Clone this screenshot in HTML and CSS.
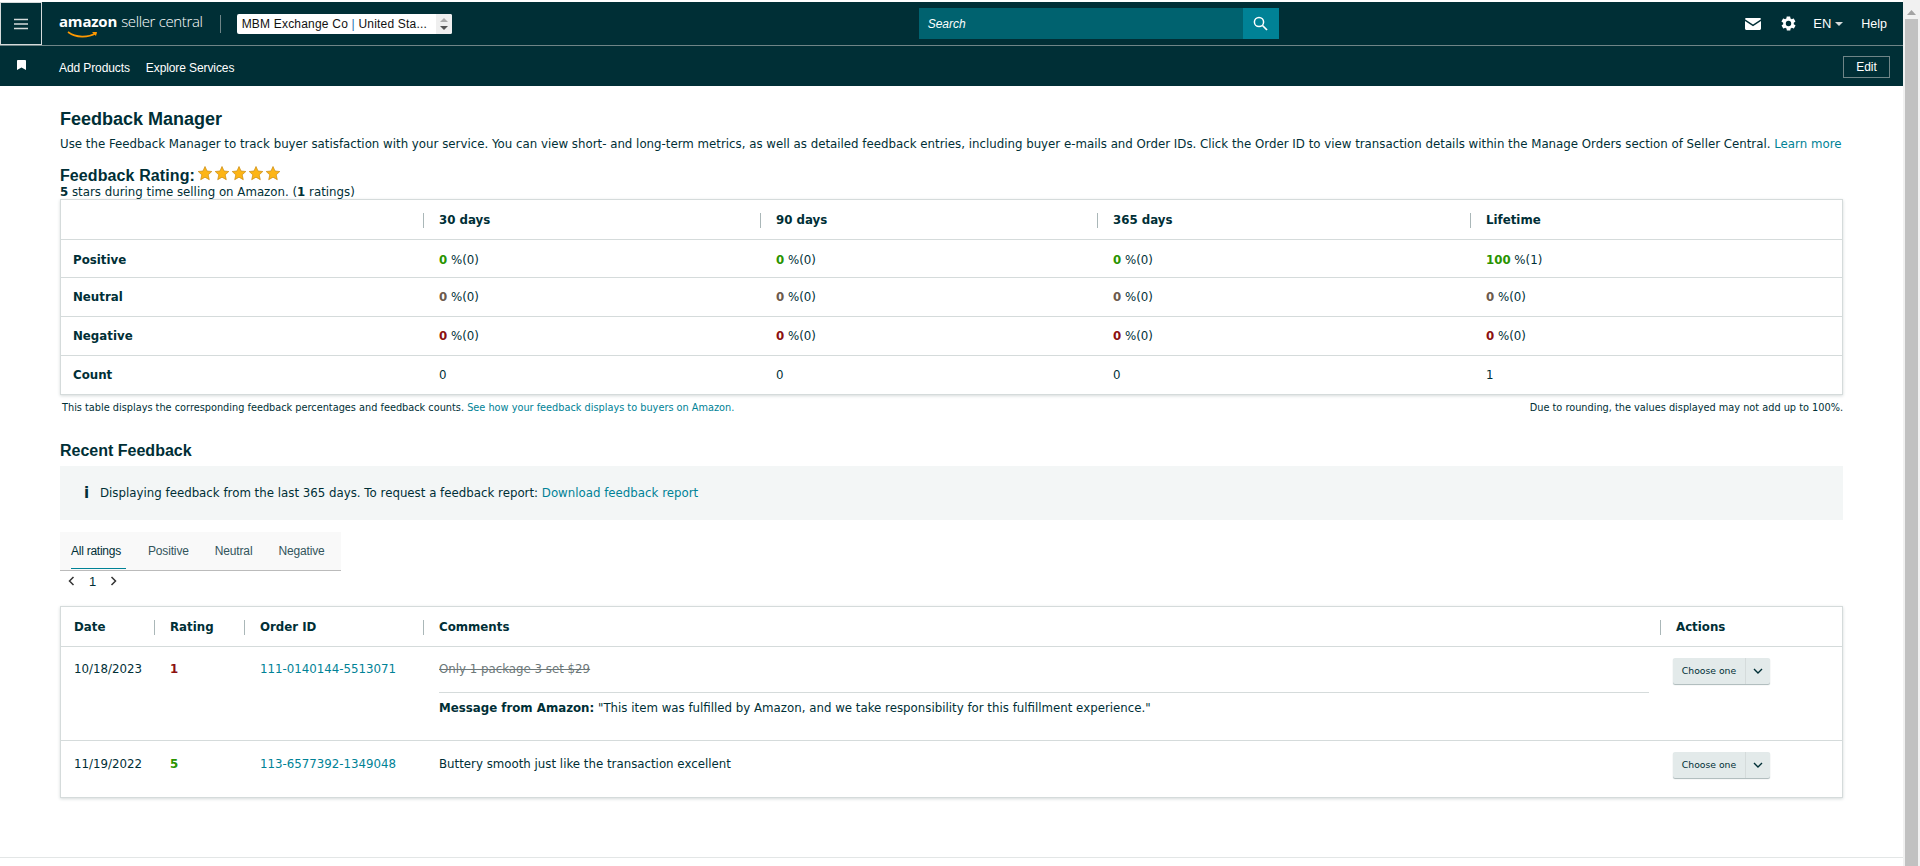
FILE: index.html
```html
<!DOCTYPE html>
<html lang="en">
<head>
  <meta charset="UTF-8">
  <title>Feedback Manager</title>
  <link rel="stylesheet" href="styles.css">
</head>
<body>
  <div class="page">
    <header class="topbar">
      <div class="nav-main">
        <button class="menu-btn" aria-label="Menu">
          <svg width="16" height="12" viewBox="0 0 16 12"><path d="M1 1.5h14M1 6h14M1 10.5h14" stroke="#d5dbdb" stroke-width="1.6" fill="none"/></svg>
        </button>
        <div class="logo">
          <span class="logo-amazon">amazon</span><span class="logo-seller">seller central</span>
          <svg class="logo-smile" width="32" height="8" viewBox="0 0 32 8"><path d="M1 1c8 6 20 6 28 1" stroke="#f90" stroke-width="1.6" fill="none"/><path d="M25 1l5 0-1 4z" fill="#f90"/></svg>
        </div>
        <div class="logo-sep"></div>
        <div class="account-select">
          <span class="account-text">MBM Exchange Co <em>|</em> United Sta...</span>
          <span class="account-arrows">
            <svg width="10" height="14" viewBox="0 0 10 14"><path d="M5 1l4 4H1z" fill="#aaa"/><path d="M1 9h8l-4 4z" fill="#555"/></svg>
          </span>
        </div>
        <div class="search">
          <span class="search-input">Search</span>
          <span class="search-btn">
            <svg width="15" height="15" viewBox="0 0 15 15"><circle cx="6" cy="6" r="4.6" stroke="#fff" stroke-width="1.5" fill="none"/><path d="M9.5 9.5l4.5 4.5" stroke="#fff" stroke-width="1.7"/></svg>
          </span>
        </div>
        <div class="nav-right">
          <svg class="icon-mail" width="16" height="12" viewBox="0 0 16 12"><path d="M1.5 0h13c.8 0 1.5.5 1.5 1.2L8 6.5 0 1.2C0 .5.7 0 1.5 0zM0 3l8 5.2L16 3v7.5c0 .8-.7 1.5-1.5 1.5h-13C.7 12 0 11.300 0 10.500z" fill="#fff"/></svg>
          <svg class="icon-gear" width="17" height="17" viewBox="0 0 24 24"><path fill="#fff" d="M19.4 13c0-.3.1-.6.1-1s0-.7-.1-1l2.100-1.600c.2-.2.2-.4.100-.6l-2-3.500c-.1-.2-.4-.3-.6-.2l-2.500 1c-.5-.4-1.100-.7-1.700-1l-.4-2.600c0-.3-.2-.4-.5-.4h-4c-.3 0-.5.100-.5.400l-.4 2.600c-.6.3-1.200.6-1.700 1l-2.500-1c-.2-.1-.5 0-.6.2l-2 3.500c-.1.2-.1.4.1.6L4.600 11c0 .3-.1.7-.1 1s0 .7.1 1l-2.100 1.600c-.2.2-.2.4-.1.6l2 3.500c.1.2.4.3.6.2l2.500-1c.5.4 1.100.7 1.700 1l.4 2.600c0 .3.2.4.5.4h4c.3 0 .5-.1.5-.4l.4-2.600c.6-.3 1.200-.6 1.700-1l2.500 1c.2.1.5 0 .6-.2l2-3.500c.1-.2.1-.4-.1-.6zM12 15.800a3.800 3.800 0 1 1 0-7.600 3.800 3.800 0 0 1 0 7.600z"/></svg>
          <span class="lang">EN<i class="caret"></i></span>
          <span class="help">Help</span>
        </div>
      </div>
      <div class="nav-sub">
        <svg class="icon-bookmark" width="9" height="10" viewBox="0 0 9 10"><path d="M1 0h7c.5 0 1 .4 1 1v9L4.500 7.500 0 10V1c0-.6.5-1 1-1z" fill="#fff"/></svg>
        <a class="sub-link">Add Products</a>
        <a class="sub-link">Explore Services</a>
        <button class="edit-btn">Edit</button>
      </div>
    </header>

    <main class="content">
      <h1 class="title">Feedback Manager</h1>
      <p class="intro">Use the Feedback Manager to track buyer satisfaction with your service. You can view short- and long-term metrics, as well as detailed feedback entries, including buyer e-mails and Order IDs. Click the Order ID to view transaction details within the Manage Orders section of Seller Central. <a class="link">Learn more</a></p>

      <div class="rating-line">
        <h2 class="rating-title">Feedback Rating:</h2>
        <svg class="stars" width="84" height="15" viewBox="0 0 84 15">
          <defs><polygon id="star" points="7,0.500 9,5 13.800,5.500 10.200,8.800 11.300,13.700 7,11.200 2.700,13.700 3.800,8.800 0.200,5.500 5,5" fill="#fdb515" stroke="#c98a10" stroke-width=".7"/></defs>
          <use href="#star" x="0"/><use href="#star" x="17"/><use href="#star" x="34"/><use href="#star" x="51"/><use href="#star" x="68"/>
        </svg>
      </div>
      <p class="rating-sub"><b>5</b> stars during time selling on Amazon. (<b>1</b> ratings)</p>

      <table class="card summary">
        <colgroup><col class="c-label"><col class="c-period"><col class="c-period"><col class="c-period3"><col></colgroup>
        <thead>
          <tr><th></th><th><span class="th-in">30 days</span></th><th><span class="th-in">90 days</span></th><th><span class="th-in">365 days</span></th><th><span class="th-in">Lifetime</span></th></tr>
        </thead>
        <tbody>
          <tr><th>Positive</th><td><b class="good">0</b> %(0)</td><td><b class="good">0</b> %(0)</td><td><b class="good">0</b> %(0)</td><td><b class="good">100</b> %(1)</td></tr>
          <tr><th>Neutral</th><td><b class="mid">0</b> %(0)</td><td><b class="mid">0</b> %(0)</td><td><b class="mid">0</b> %(0)</td><td><b class="mid">0</b> %(0)</td></tr>
          <tr><th>Negative</th><td><b class="bad">0</b> %(0)</td><td><b class="bad">0</b> %(0)</td><td><b class="bad">0</b> %(0)</td><td><b class="bad">0</b> %(0)</td></tr>
          <tr><th>Count</th><td>0</td><td>0</td><td>0</td><td>1</td></tr>
        </tbody>
      </table>
      <div class="table-note">
        <span>This table displays the corresponding feedback percentages and feedback counts. <a class="link">See how your feedback displays to buyers on Amazon.</a></span>
        <span>Due to rounding, the values displayed may not add up to 100%.</span>
      </div>

      <h2 class="section-title">Recent Feedback</h2>
      <div class="info-box">
        <span class="info-icon">i</span>
        <span>Displaying feedback from the last 365 days. To request a feedback report: <a class="link">Download feedback report</a></span>
      </div>

      <div class="tabs">
        <span class="tab active">All ratings</span>
        <span class="tab">Positive</span>
        <span class="tab">Neutral</span>
        <span class="tab">Negative</span>
      </div>
      <div class="pager">
        <svg width="7" height="10" viewBox="0 0 7 10"><path d="M5.500 1L1.500 5l4 4" stroke="#333" stroke-width="1.500" fill="none"/></svg>
        <span>1</span>
        <svg width="7" height="10" viewBox="0 0 7 10"><path d="M1.500 1l4 4-4 4" stroke="#333" stroke-width="1.500" fill="none"/></svg>
      </div>

      <table class="card feedback">
        <colgroup><col class="f-date"><col class="f-rating"><col class="f-order"><col><col class="f-actions"></colgroup>
        <thead>
          <tr><th>Date</th><th><span class="th-in">Rating</span></th><th><span class="th-in">Order ID</span></th><th><span class="th-in">Comments</span></th><th><span class="th-in">Actions</span></th></tr>
        </thead>
        <tbody>
          <tr class="row-tall">
            <td>10/18/2023</td>
            <td><b class="bad">1</b></td>
            <td><a class="link">111-0140144-5513071</a></td>
            <td class="comment">
              <div class="struck">Only 1 package 3 set $29</div>
              <div class="amazon-msg"><b>Message from Amazon:</b> "This item was fulfilled by Amazon, and we take responsibility for this fulfillment experience."</div>
            </td>
            <td><div class="choose"><span class="choose-label">Choose one</span><span class="choose-arrow"><svg width="10" height="6" viewBox="0 0 10 6"><path d="M1 1l4 4 4-4" stroke="#002f36" stroke-width="1.400" fill="none"/></svg></span></div></td>
          </tr>
          <tr class="row-short">
            <td>11/19/2022</td>
            <td><b class="good">5</b></td>
            <td><a class="link">113-6577392-1349048</a></td>
            <td>Buttery smooth just like the transaction excellent</td>
            <td><div class="choose"><span class="choose-label">Choose one</span><span class="choose-arrow"><svg width="10" height="6" viewBox="0 0 10 6"><path d="M1 1l4 4 4-4" stroke="#002f36" stroke-width="1.400" fill="none"/></svg></span></div></td>
          </tr>
        </tbody>
      </table>
      <div class="footer-line"></div>
    </main>
  </div>
  <div class="scrollbar">
    <svg class="scroll-arrow" width="9" height="5" viewBox="0 0 9 5"><path d="M4.500 0L9 5H0z" fill="#a3a3a3"/></svg>
    <div class="scroll-thumb"></div>
  </div>
</body>
</html>
```

FILE: styles.css
```css
html, body {
  margin: 0;
  height: 866px;
  overflow: hidden;
  background: #fff;
}
body {
  display: flex;
  color: #002f36;
  font-family: "DejaVu Sans", Verdana, sans-serif;
  font-size: 11.8px;
}
b { font-weight: bold; }
a { text-decoration: none; }
p { margin: 0; }

.page {
  flex: 1;
  min-width: 0;
}
.scrollbar {
  width: 17px;
  background: #f1f1f1;
  display: flex;
  flex-direction: column;
  align-items: center;
}
.scroll-arrow { margin-top: 10px; margin-bottom: 4px; }
.scroll-thumb {
  width: 13px;
  flex: 1;
  background: #c1c1c1;
}

/* top nav */
.topbar {
  margin-top: 2px;
  background: #002f36;
  color: #fff;
  font-family: "Liberation Sans", Arial, sans-serif;
  font-size: 12px;
}
.nav-main {
  height: 43px;
  display: flex;
  align-items: center;
  border-bottom: 1px solid #6f8587;
}
.menu-btn {
  width: 42px;
  height: 43px;
  background: transparent;
  border: 1px solid #d5dbdb;
  padding: 0;
  display: flex;
  align-items: center;
  justify-content: center;
}
.logo {
  position: relative;
  margin-left: 17px;
  display: flex;
  align-items: baseline;
  color: #fff;
  height: 26px;
}
.logo-amazon {
  font-family: "Open Sans", sans-serif;
  font-weight: 700;
  font-size: 15px;
  letter-spacing: -.2px;
}
.logo-seller {
  font-family: "Open Sans", sans-serif;
  font-weight: 300;
  font-size: 15px;
  margin-left: 4px;
  letter-spacing: -.35px;
  color: #fff;
}
.logo-smile {
  position: absolute;
  left: 8px;
  top: 20px;
}
.logo-sep {
  width: 1px;
  height: 18px;
  background: #6f8587;
  margin-left: 17px;
}
.account-select {
  margin-left: 16px;
  width: 215px;
  height: 20px;
  background: #fff;
  border-radius: 2px;
  color: #111;
  display: flex;
  align-items: center;
  justify-content: space-between;
  padding-left: 5px;
  box-sizing: border-box;
  font-size: 12px;
}
.account-text { font-family: "Liberation Sans", Arial, sans-serif; letter-spacing: .2px; }
.account-text em { font-style: normal; color: #1c6fb0; }
.account-arrows {
  width: 16px;
  height: 20px;
  background: #efefef;
  display: flex;
  align-items: center;
  justify-content: center;
  border-radius: 0 2px 2px 0;
}
.search {
  margin-left: 467px;
  width: 360px;
  height: 31px;
  display: flex;
  background: #00626f;
}
.search-input {
  flex: 1;
  line-height: 32px;
  padding-left: 9px;
  font-style: italic;
  font-size: 12px;
}
.search-btn {
  width: 36px;
  background: #008296;
  display: flex;
  align-items: center;
  justify-content: center;
}
.nav-right {
  margin-left: auto;
  display: flex;
  align-items: center;
  font-size: 12px;
  padding-right: 16px;
}
.icon-gear { margin-left: 19px; }
.lang { margin-left: 16px; display: flex; align-items: center; font-size: 13px; }
.caret {
  border: 4px solid transparent;
  border-top-color: #d5dbdb;
  border-bottom: 0;
  margin-left: 4px;
}
.help { margin-left: 18px; font-size: 12.500px; }
.nav-sub {
  height: 40px;
  display: flex;
  align-items: center;
  padding-left: 17px;
  padding-right: 13px;
}
.icon-bookmark { margin-top: -2px; }
.sub-link {
  font-size: 12px;
  letter-spacing: -.1px;
  color: #fff;
  margin-left: 16px;
  margin-top: 3px;
}
.icon-bookmark + .sub-link { margin-left: 33px; }
.edit-btn {
  margin-left: auto;
  margin-top: 2px;
  width: 47px;
  height: 22px;
  background: transparent;
  border: 1px solid #6f8587;
  color: #fff;
  font: 12px "Liberation Sans", Arial, sans-serif;
  padding: 0;
}

/* content */
.content {
  padding: 23px 60px 0 60px;
}
.title {
  margin: 0;
  font: bold 18px/20px "Liberation Sans", Arial, sans-serif;
}
.link { color: #008296; }
.intro {
  margin-top: 8px;
  line-height: 14px;
  white-space: nowrap;
}
.rating-line {
  margin-top: 15px;
  display: flex;
  align-items: center;
  height: 20px;
}
.rating-title {
  margin: 0;
  font: bold 16px/20px "Liberation Sans", Arial, sans-serif;
  letter-spacing: .1px;
}
.stars { margin-left: 3px; margin-top: -6px; }
.rating-sub { line-height: 12px; margin-top: 0; }

.card {
  width: calc(100% - 2px);
  margin-left: 1px;
  border-collapse: collapse;
  table-layout: fixed;
  background: #fff;
  box-shadow: 0 0 0 1px #d5dbdb, 0 1px 3px 1px #d5dbdb;
}
.card th, .card td {
  text-align: left;
  font-weight: normal;
  padding: 0 0 0 16px;
}
.card tr { border-bottom: 1px solid #d5dbdb; }
.card tbody tr:last-child { border-bottom: 0; }
.card thead th { font-weight: bold; }
.card tbody th { font-weight: bold; padding-left: 12px; }
.th-in {
  display: block;
  position: relative;
}
.th-in::before {
  content: "";
  position: absolute;
  left: -16px;
  top: 0;
  width: 1px;
  height: 15px;
  background: #aab7b8;
}

.summary { margin-top: 2px; }
.summary thead tr { height: 39px; }
.summary thead th { padding-top: 2px; }
.summary tbody tr { height: 39px; }
.summary tbody tr:first-child { height: 38px; }
.summary tbody tr:first-child th, .summary tbody tr:first-child td { padding-top: 3px; }
.summary tbody tr:nth-child(2) th, .summary tbody tr:nth-child(2) td { padding-top: 1px; }
.c-label { width: 362px; }
.c-period { width: 337px; }
.c-period3 { width: 373px; }
.good { color: #2a9400; }
.mid { color: #6c5a4c; }
.bad { color: #8c1010; }

.table-note {
  display: flex;
  justify-content: space-between;
  margin: 8px 0 0 2px;
  font-size: 9.750px;
  line-height: 12px;
}
.section-title {
  margin: 27px 0 0;
  font: bold 16px/20px "Liberation Sans", Arial, sans-serif;
}
.info-box {
  margin-top: 5px;
  height: 54px;
  background: #f3f6f6;
  display: flex;
  align-items: center;
  padding-left: 24px;
}
.info-icon {
  font: bold 15px "DejaVu Sans", sans-serif;
  width: 16px;
}
.tabs {
  margin-top: 12px;
  width: 270px;
  height: 38px;
  background: #f9f9f9;
  border-bottom: 1px solid #bbb;
  display: flex;
  font-family: "Liberation Sans", Arial, sans-serif;
  font-size: 12px;
  letter-spacing: -.15px;
  padding-left: 11px;
}
.tab {
  line-height: 38px;
  margin-right: 26px;
  color: #33555c;
  white-space: nowrap;
}
.tab.active {
  color: #002f36;
  height: 36px;
  border-bottom: 1px solid #008296;
  letter-spacing: -.25px;
  padding-right: 5px;
  margin-right: 22px;
}
.pager {
  display: flex;
  align-items: center;
  gap: 14px;
  height: 20px;
  padding-left: 8px;
  font: 13px "Liberation Sans", Arial, sans-serif;
}

.feedback { margin-top: 16px; }
.feedback thead tr { height: 39px; }
.feedback thead th { padding-top: 2px; }
.f-date { width: 93px; }
.f-rating { width: 90px; }
.f-order { width: 179px; }
.f-actions { width: 182px; }
.feedback th:first-child, .feedback td:first-child { padding-left: 13px; }
.row-tall { height: 94px; }
.row-tall td { vertical-align: top; padding-top: 15px; }
.row-short td { vertical-align: top; padding-top: 16px; }
.row-short { height: 57px; }
.card .comment { padding-right: 11px; }
.struck { text-decoration: line-through; color: #6c7778; }
.amazon-msg {
  margin-top: 16px;
  padding-top: 8px;
  border-top: 1px solid #d5dbdb;
}
.choose {
  display: flex;
  width: 97px;
  height: 26px;
  margin-top: -4px;
  margin-left: -3px;
  border-radius: 2px;
  background: #e3eaea;
  box-shadow: 0 1px 1px #aab7b8;
  font-size: 9.250px;
}
.choose-label {
  width: 72px;
  text-align: center;
  line-height: 26px;
  border-right: 1px solid #d5dbdb;
}
.choose-arrow {
  flex: 1;
  display: flex;
  align-items: center;
  justify-content: center;
}
.row-short .choose { margin-top: -5px; }
.footer-line {
  margin: 60px -60px 0;
  border-top: 1px solid #e3e6e6;
}
```
